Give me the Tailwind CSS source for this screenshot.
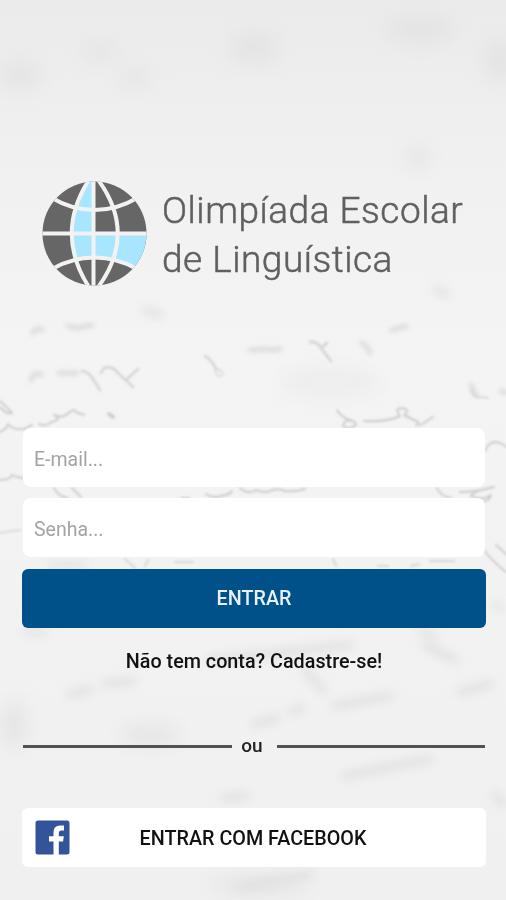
<!DOCTYPE html>
<html lang="pt-BR">
<head>
  <meta charset="UTF-8" />
  <meta name="viewport" content="width=device-width, initial-scale=1.0"/>
  <title>Olimpíada Escolar de Linguística</title>
  <script src="https://cdn.jsdelivr.net/npm/@tailwindcss/browser@4"></script>
</head>
<body class="relative h-[900px] overflow-hidden bg-[#f1f1f1] font-['Roboto',sans-serif] text-[#111]">

  <!-- Handwritten paper background -->
  <svg class="absolute inset-0 -z-10" width="506" height="900" viewBox="0 0 506 900" fill="none" stroke-linecap="round" stroke-linejoin="round" aria-hidden="true">
    <defs>
      <linearGradient id="paper" x1="0" y1="0" x2="0" y2="1">
        <stop offset="0" stop-color="#ebebeb"/>
        <stop offset=".2" stop-color="#f1f1f1"/>
        <stop offset=".4" stop-color="#f4f4f4"/>
        <stop offset="1" stop-color="#f0f0f0"/>
      </linearGradient>
      <filter id="soft" x="-50%" y="-50%" width="200%" height="200%"><feGaussianBlur stdDeviation="9"/></filter>
      <filter id="smudge" x="-50%" y="-50%" width="200%" height="200%"><feGaussianBlur stdDeviation="5"/></filter>
      <filter id="faint" x="-10%" y="-10%" width="120%" height="120%"><feGaussianBlur stdDeviation="2"/></filter>
      <filter id="ink" x="-10%" y="-10%" width="120%" height="120%"><feGaussianBlur stdDeviation=".9"/></filter>
    </defs>
    <rect width="506" height="900" fill="url(#paper)"/>
    <g fill="#e4e4e4" filter="url(#soft)">
      <ellipse cx="100" cy="52" rx="18" ry="8"/>
      <ellipse cx="255" cy="48" rx="25" ry="16"/>
      <ellipse cx="420" cy="30" rx="36" ry="14"/>
      <ellipse cx="20" cy="75" rx="20" ry="14"/>
      <ellipse cx="500" cy="60" rx="16" ry="22"/>
      <ellipse cx="418" cy="158" rx="12" ry="10"/>
      <ellipse cx="135" cy="78" rx="14" ry="9"/>
      <ellipse cx="330" cy="382" rx="50" ry="14" opacity=".4"/>
      <ellipse cx="150" cy="735" rx="30" ry="10"/>
      <ellipse cx="14" cy="725" rx="12" ry="24"/>
      <ellipse cx="260" cy="885" rx="50" ry="8"/>
    </g>
    <g stroke="#dfdfdf" stroke-width="7" filter="url(#smudge)">
      <path d="M70 694l20-4M105 684l28-3M255 724l22-6M292 712l10-4M335 706l55-10M460 692l30-8M345 776l85-17M225 798l20-2M305 670l18 20M425 645l30 15M495 795l8 8M210 660l140-15M240 888l70-14M145 310l15 5M437 289l8 6"/>
    </g>
    <g stroke="#d6d6d6" stroke-width="5" filter="url(#faint)" opacity=".75">
      <path d="M33 333q4-7 9-3M68 326l10 2 14-3M250 350l6 0M255 350l8-1 8 1 9-1M392 330l14-4M31 380q4-10 10-5M59 373l18 0M362 343q8 6 8 10M471 385l5 10M501 391l5 2"/>
    </g>
    <g stroke="#d8d8d8" stroke-width="3" filter="url(#ink)">
      <path d="M82 371q7 1 11 8l7 11M101 373l3-5q8-3 14 5l15 14M127 379l11-10"/>
      <path d="M205 356q7 4 11 13"/>
      <path d="M216 369q6 1 7 5-5 5-8-3" opacity=".5"/>
      <path d="M310 342q7-1 11 6l10 13M322 347l5-4"/>
    </g>
    <g stroke="#cdcdcd" stroke-width="2" filter="url(#ink)">
      <path d="M0 401q7 6 12 12-5 2-12-6"/>
      <path d="M0 432q7-3 8-8 4 6 16 5 6-3 8-4M39 424q8 3 12-2 7-1 7-4l-4-3q9 4 16-3 4-4 6 0l8 3"/>
      <path d="M109 414l4 3" stroke-width="4"/>
      <path d="M337 410q3 5 10 9 9 2 9 6-7 5-13 1 2-8 7-5M364 421q24 1 36-5-6-8 2-8 9 2 2 7l14 7q3 4-2 3M421 425l12-8"/>
      <path d="M471 390q4 8 9 7l8 1" opacity=".6"/>
      <path d="M0 480q10 0 12-5 5 3 11 3"/>
      <path d="M485 451q3-9 11-9 7 1 10 5"/>
      <path d="M54 488q5 9 14 10M72 488l9 9M182 498h7M206 494q8 5 14 2 10-1 12-5M240 488q8 7 16 2 8 4 17 0 6-2 12 1 10 1 20-2"/>
      <path d="M437 488q3 8 14 10M460 492q17 0 34-5-21 4-23 9 12 5 20-1-2 7-11 7"/>
      <path d="M0 533q11-2 20-3" opacity=".6"/>
      <path d="M483 549q10 13 23 23M496 545l10 9"/>
      <path d="M125 559l10 9M145 566l3-6M175 562h18M333 559l3 7M378 566h10M430 561l24 0M411 566l8-2" opacity=".7"/>
    </g>
    <g stroke="#dddddd" stroke-width="5" filter="url(#smudge)">
      <path d="M50 565h35M420 630l15 8M494 605l8 3M25 632h20"/>
    </g>
  </svg>

  <main class="flex flex-col pl-[22px] pr-5 pt-[181px]">

    <!-- Logo -->
    <header class="ml-5 flex h-[106px] items-start">
      <svg class="shrink-0" width="105" height="105" viewBox="0 0 105 105" aria-hidden="true">
        <clipPath id="globe"><circle cx="52.5" cy="52.5" r="52"/></clipPath>
        <g clip-path="url(#globe)">
          <rect width="105" height="105" fill="#666"/>
          <path fill="#a8e6ff" d="M52.5 0H46Q30 24 30 52.5q0 15 4 26 9-2 18.500-2Q74 76 92 86l13-10V52.500H52.500z"/>
          <g fill="none" stroke="#f2f2f2" stroke-width="4">
            <path d="M51.500 0v105M0 52.500h105"/>
            <path d="M47.500-2Q12 52.500 47.500 107M55.500-2Q96 52.500 55.500 107"/>
            <path d="M10 17Q30 29 52.500 29T95 17M10 88Q30 76.500 52.500 76.500T95 88"/>
          </g>
        </g>
      </svg>
      <h1 class="ml-[15px] mt-[5px] whitespace-nowrap text-[37px] font-light leading-[49px] tracking-[0.5px] text-[#5f5f5f] [-webkit-text-stroke:0.5px_#5f5f5f]">
        Olimpíada Escolar<br>de Linguística
      </h1>
    </header>

    <!-- Login Form -->
    <form class="mt-[141px] flex flex-col" onsubmit="return false">
      <input class="mx-px h-[59px] rounded-lg bg-white px-[11px] pt-1 text-[19.5px] placeholder:text-[#a3a3a3] focus:outline-none" type="email" name="email" placeholder="E-mail..." />
      <input class="mx-px mt-[11px] h-[59px] rounded-lg bg-white px-[11px] pt-1 text-[19.5px] placeholder:text-[#a3a3a3] focus:outline-none" type="password" name="password" placeholder="Senha..." />
      <button class="mt-3 h-[59px] rounded-md bg-[#00508a] text-[19.75px] font-medium text-[#e8f1f8]" type="submit">ENTRAR</button>
    </form>

    <a href="#" class="mt-5 self-center text-[19.75px] font-medium leading-7">Não tem conta? Cadastre-se!</a>

    <!-- Divider -->
    <div class="mx-px mt-14 flex h-7 items-center text-[19px] font-medium leading-7">
      <span class="h-[3px] flex-1 bg-[#525252]"></span>
      <span class="w-[45px] pr-1 text-center text-[#222]">ou</span>
      <span class="h-[3px] flex-1 bg-[#525252]"></span>
    </div>

    <button class="mt-12 flex h-[59px] items-center rounded-md bg-white pl-[13px] pr-[50px] text-[19.75px] font-medium" type="button">
      <svg class="shrink-0" width="35" height="35" viewBox="0 0 35 35" aria-hidden="true">
        <rect x=".5" y=".5" width="34" height="34" rx="2.500" fill="#33549a"/>
        <path fill="#fff" d="M18.500 35V21.500H14v-5.300h4.500v-4q0-6.700 6.700-6.700h3.800v4.900h-2.600q-2.600 0-2.600 2.500v3.300h5l-.7 5.300h-4.300V35z"/>
      </svg>
      <span class="flex-1 pt-0.5 text-center">ENTRAR COM FACEBOOK</span>
    </button>
  </main>

</body>
</html>
